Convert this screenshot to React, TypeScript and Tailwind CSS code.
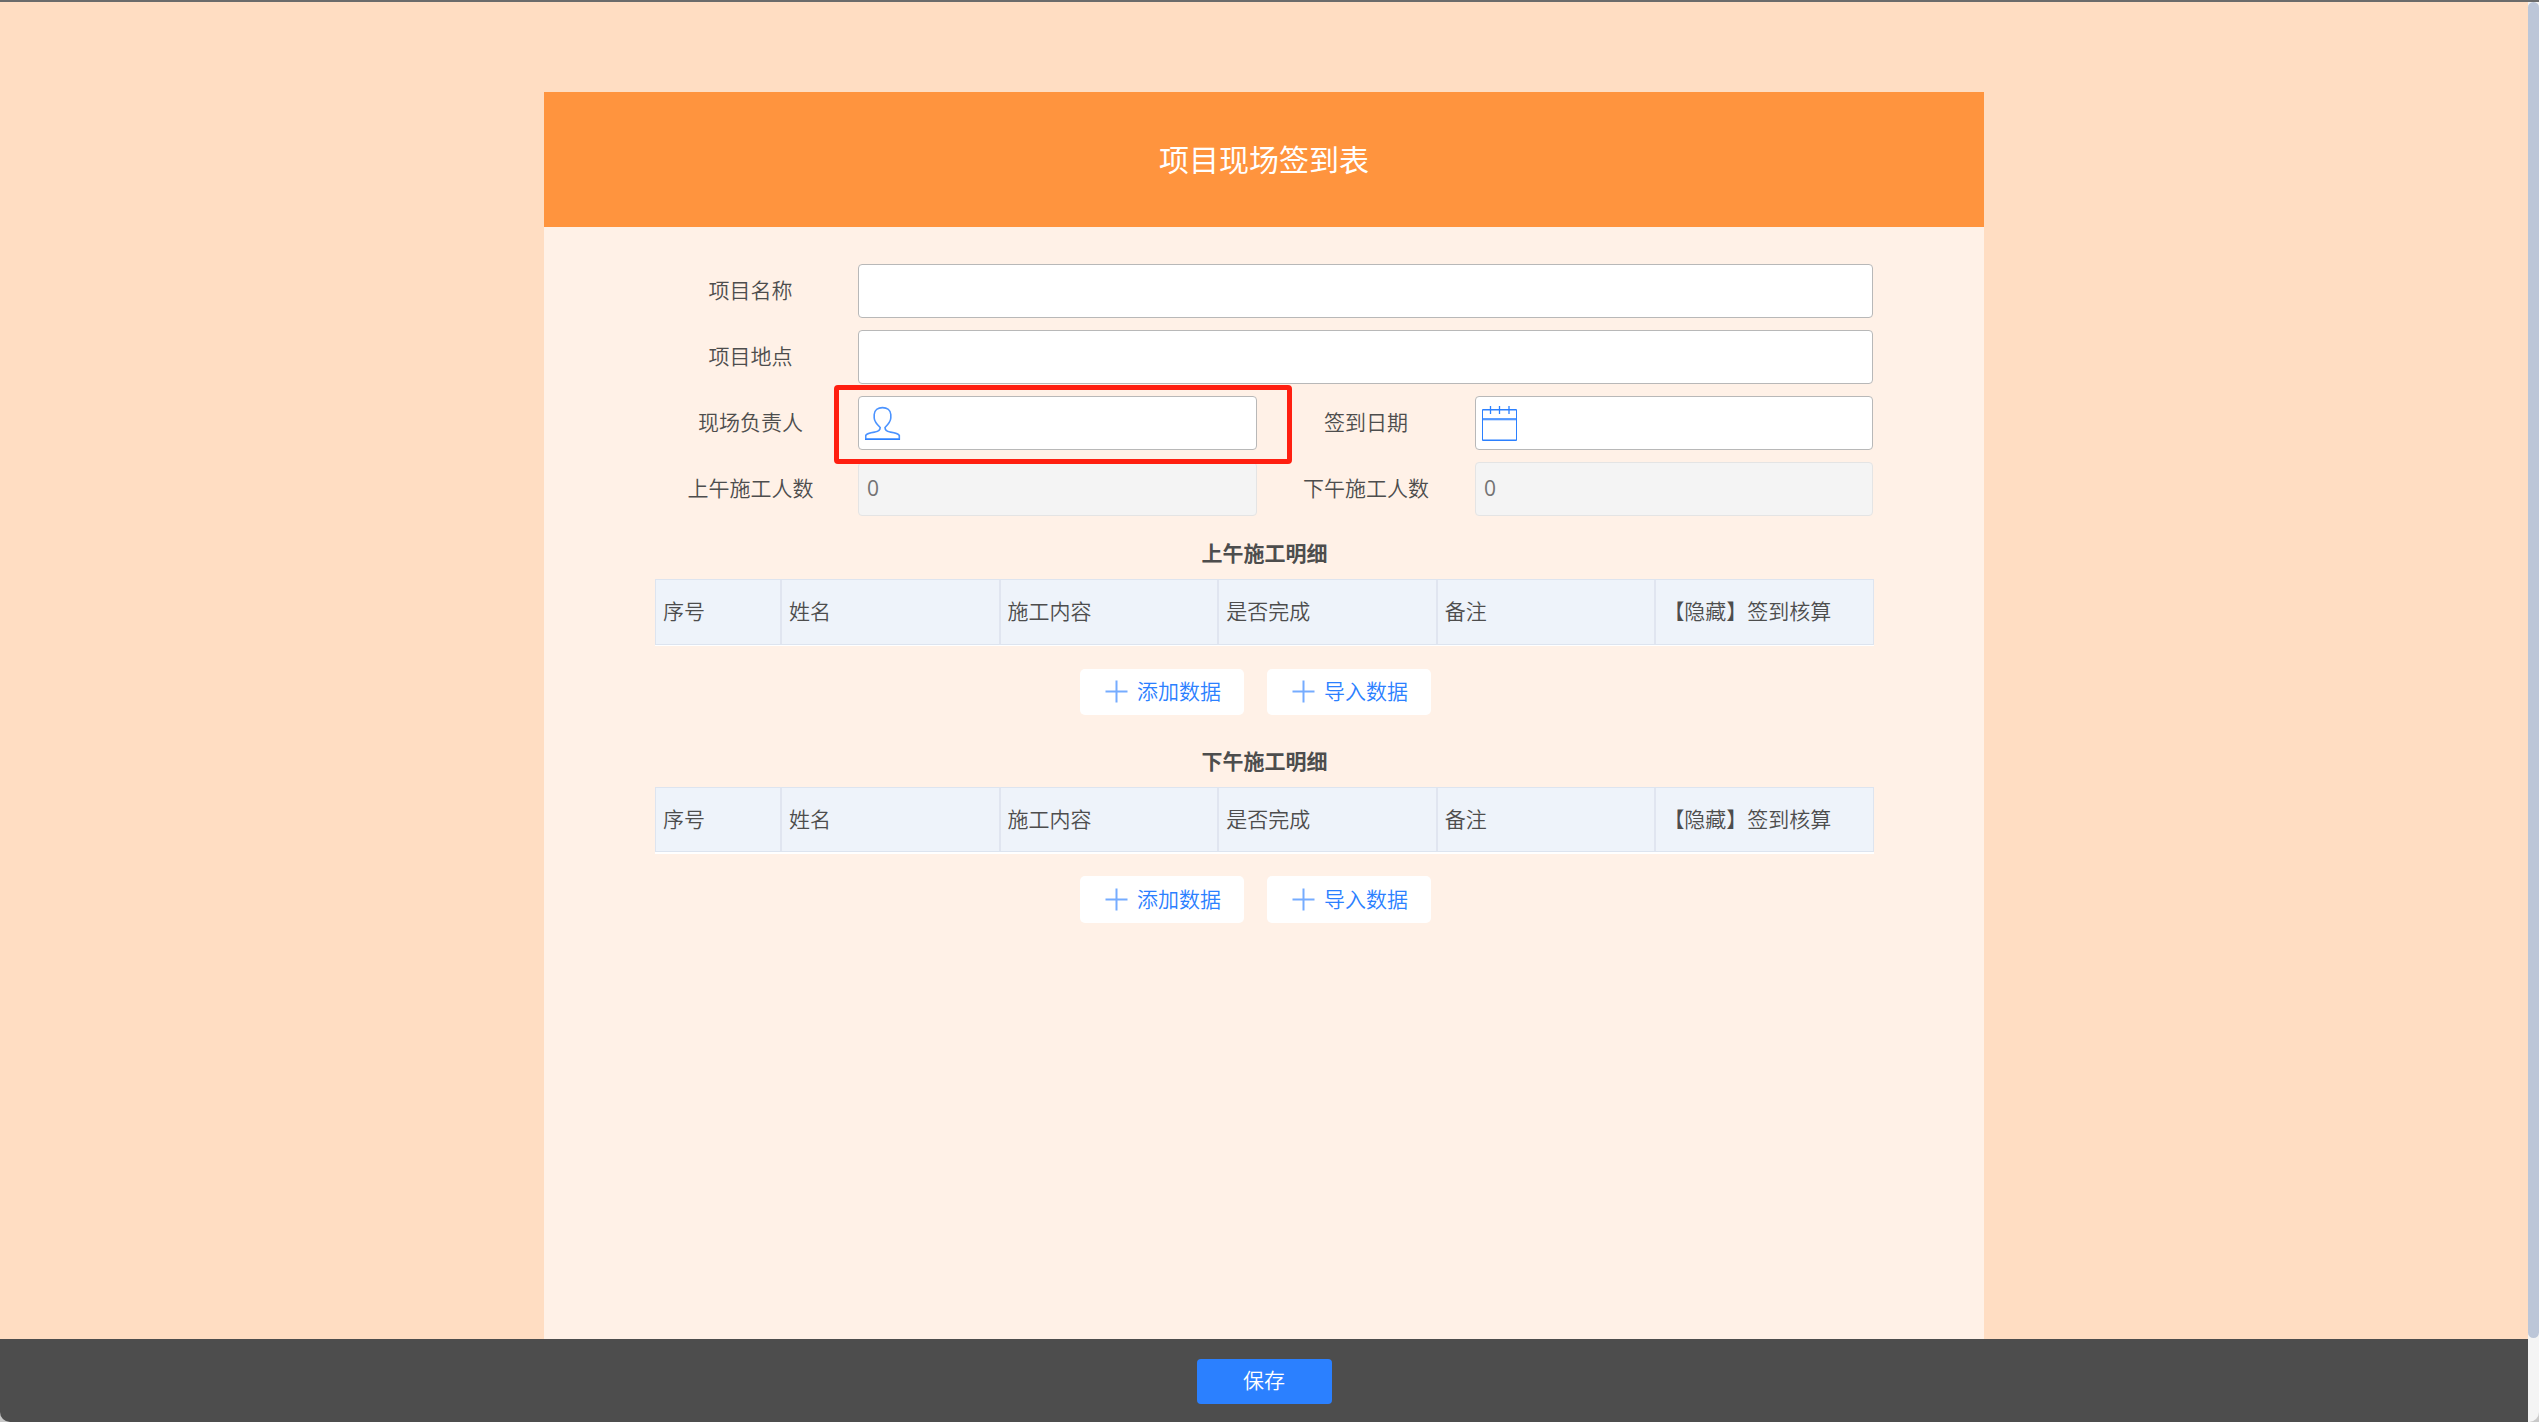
import type { ReactNode } from 'react';

const columns = ['姓名', '施工内容', '是否完成', '备注', '【隐藏】签到核算'];

function PersonIcon() {
  return (
    <svg className="mt-[2px]" width="36" height="36" viewBox="0 0 36 36" fill="none" stroke="#2b80ff">
      <path
        d="M15.2 21.5C12 18.5 9.4 16 9.2 12V8.5C9.4 4 13 1.6 17.5 1.6S25.6 4 25.8 8.5V12C25.6 16 23 18.5 20 21.5C20 24.5 21.5 25.4 25 26C30 26.8 33 27.2 34.3 29.5V33H.7V29.5C2 27.2 5 26.8 10 26C13.5 25.4 15.2 24.5 15.2 21.5Z"
        strokeWidth="1.6"
        strokeOpacity=".85"
      />
      <path d="M0 33.4H35" strokeWidth="1.4" />
    </svg>
  );
}

function CalendarIcon() {
  return (
    <svg className="mt-[2px]" width="36" height="36" viewBox="0 0 36 36" fill="none" stroke="#2b80ff">
      <path d="M.5 3.5H34.5V34.5H.5Z" />
      <path d="M1 4.5H34M1 33.5H34M1 14H34" strokeOpacity=".5" />
      <path d="M0 13H35M8.5 0V8M17.5 0V8M27 0V8" strokeWidth="1.3" />
    </svg>
  );
}

function Label({ className, children }: { className: string; children: ReactNode }) {
  return <div className={`${className} h-[54px] shrink-0 text-center leading-[51px]`}>{children}</div>;
}

function Input({ className, children }: { className: string; children?: ReactNode }) {
  return (
    <div className={`${className} flex h-[54px] items-center rounded-[4px] border border-[#b8b8b8] bg-white`}>
      {children}
    </div>
  );
}

function ReadOnly({ className }: { className: string }) {
  return (
    <div
      className={`${className} flex h-[54px] items-center rounded-[4px] border border-[#e4e4e4] bg-[#f4f4f4] pl-2 text-[#737373]`}
    >
      <span className="font-['Open_Sans'] font-normal">0</span>
    </div>
  );
}

function AddButton({ text, className }: { text: string; className: string }) {
  return (
    <button className={`${className} flex w-[164px] items-center rounded-[5px] bg-white pl-[25px] text-[#2b80ff]`}>
      <svg
        className="mb-px"
        width="23"
        height="23"
        viewBox="0 0 23 23"
        stroke="#2b80ff"
        strokeOpacity=".65"
        strokeWidth="2"
      >
        <path d="M.5 11.5H22.5M11.5 .5V22.5" />
      </svg>
      <span className="ml-[9px] pb-[2px]">{text}</span>
    </button>
  );
}

function Detail({ title, table, actions, button }: { title: string; table: string; actions: string; button: string }) {
  return (
    <section>
      <h2 className="h-[50px] text-center leading-[47px] font-bold">{title}</h2>
      <div className={`${table} bg-white`}>
        <div className="flex h-full items-center border border-[#dde4ef] bg-[#eef3fa]">
          <div className="flex h-full w-[124px] shrink-0 items-center pb-[2px] pl-[7px]">序号</div>
          {columns.map((c) => (
            <div
              key={c}
              className="flex h-full flex-1 items-center border-l-2 border-[#e0e5f0] pb-[2px] pl-[7px] whitespace-nowrap"
            >
              {c}
            </div>
          ))}
        </div>
      </div>
      <div className={`${actions} flex gap-[23px] pl-[425px]`}>
        <AddButton text="添加数据" className={button} />
        <AddButton text="导入数据" className={button} />
      </div>
    </section>
  );
}

export default function App() {
  return (
    <div className="flex h-[1422px] w-[2539px] flex-col overflow-hidden bg-[#c9c9c9] font-['Noto_Sans_CJK_SC','Noto_Sans_SC',sans-serif] text-[21px] font-[350] text-[#4d4d4d]">
      <div className="h-[2px] shrink-0 bg-[#6b6b6b]" />
      <div className="flex min-h-0 flex-1">
        <div className="flex w-[2528px] flex-col overflow-hidden rounded-bl-[10px]">
          <div className="flex flex-1 justify-center bg-[#ffddc2] pt-[90px]">
            <main className="w-[1440px] bg-[#fff1e7]">
              <h1 className="h-[135px] bg-[#ff943e] text-center text-[30px] leading-[132px] font-normal text-white">
                项目现场签到表
              </h1>
              <div className="ml-[111px] w-[1219px] pt-[37px]">
                <div className="flex flex-col gap-3">
                  <div className="flex">
                    <Label className="w-[203px] pr-3">项目名称</Label>
                    <Input className="w-[1015px]" />
                  </div>
                  <div className="flex">
                    <Label className="w-[203px] pr-3">项目地点</Label>
                    <Input className="w-[1015px]" />
                  </div>
                  <div className="flex">
                    <Label className="w-[203px] pr-3">现场负责人</Label>
                    <div className="relative z-10">
                      <Input className="w-[399px] pl-[6px]">
                        <PersonIcon />
                      </Input>
                      <div className="absolute -top-[11.5px] -left-[24.5px] h-[79px] w-[458px] rounded-[4px] border-[5px] border-[#ff1f10]" />
                    </div>
                    <Label className="w-[218px]">签到日期</Label>
                    <Input className="w-[398px] pl-[6px]">
                      <CalendarIcon />
                    </Input>
                  </div>
                  <div className="flex">
                    <Label className="w-[203px] pr-3">上午施工人数</Label>
                    <ReadOnly className="w-[399px]" />
                    <Label className="w-[218px]">下午施工人数</Label>
                    <ReadOnly className="w-[398px]" />
                  </div>
                </div>
                <div className="h-[13px]" />
                <Detail title="上午施工明细" table="h-[67px] pb-px" actions="pt-[23px]" button="h-[46px]" />
                <div className="h-[22px]" />
                <Detail title="下午施工明细" table="h-[67px] pb-[2px]" actions="pt-[22px]" button="h-[47px]" />
              </div>
            </main>
          </div>
          <footer className="flex h-[83px] shrink-0 justify-center bg-[#4d4d4d] pt-5">
            <button className="h-[45px] w-[135px] rounded-[4px] bg-[#2b80ff] pb-[3px] text-white">保存</button>
          </footer>
        </div>
        <div className="w-[11px] rounded-br-[10px] bg-[#f4f4f4]">
          <div className="h-[1336px] rounded-full bg-[#bcc6d8]" />
        </div>
      </div>
    </div>
  );
}
